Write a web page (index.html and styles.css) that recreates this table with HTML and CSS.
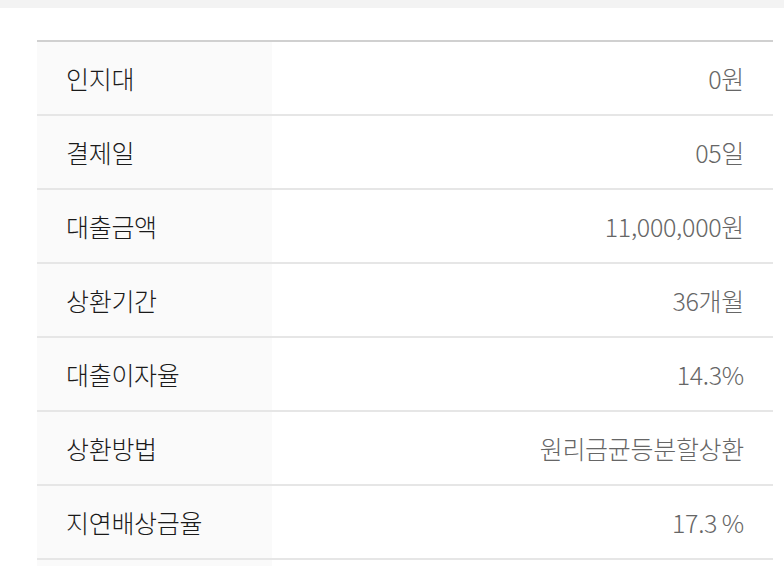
FILE: index.html
```html
<!DOCTYPE html>
<html lang="ko">
<head>
  <meta charset="UTF-8" />
  <meta name="viewport" content="width=device-width, initial-scale=1.0"/>
  <title>대출 상세</title>
  <link rel="stylesheet" href="styles.css">
</head>
<body>
  <div class="top-bar"></div>
  <section class="loan-info">
    <div class="info-table">
      <div class="row"><div class="label">인지대</div><div class="value">0원</div></div>
      <div class="row"><div class="label">결제일</div><div class="value">05일</div></div>
      <div class="row"><div class="label">대출금액</div><div class="value">11,000,000원</div></div>
      <div class="row"><div class="label">상환기간</div><div class="value">36개월</div></div>
      <div class="row"><div class="label">대출이자율</div><div class="value">14.3%</div></div>
      <div class="row"><div class="label">상환방법</div><div class="value">원리금균등분할상환</div></div>
      <div class="row"><div class="label">지연배상금율</div><div class="value">17.3&thinsp;%</div></div>
      <div class="row"><div class="label"></div><div class="value"></div></div>
    </div>
  </section>
</body>
</html>
```

FILE: styles.css
```css
* { box-sizing: border-box; }
body {
  margin: 0;
  font-family: "Noto Sans CJK KR", "Noto Sans", sans-serif;
  background: #fff;
  overflow: hidden;
}
.top-bar {
  height: 8px;
  background: #f3f3f3;
}
.loan-info {
  padding: 32px 11px 0 37px;
}
.info-table {
  border-top: 2px solid #d0d0d0;
}
.row {
  display: flex;
  height: 74px;
  border-bottom: 2px solid #e6e6e6;
  font-size: 25px;
  letter-spacing: -0.3px;
}
.label {
  width: 235px;
  flex-shrink: 0;
  background: #fafafa;
  color: #1a1a1a;
  font-weight: 300;
  padding-left: 29px;
  display: flex;
  align-items: center;
}
.value {
  flex: 1;
  color: #666;
  font-weight: 300;
  padding-right: 29px;
  display: flex;
  align-items: center;
  justify-content: flex-end;
}
```
